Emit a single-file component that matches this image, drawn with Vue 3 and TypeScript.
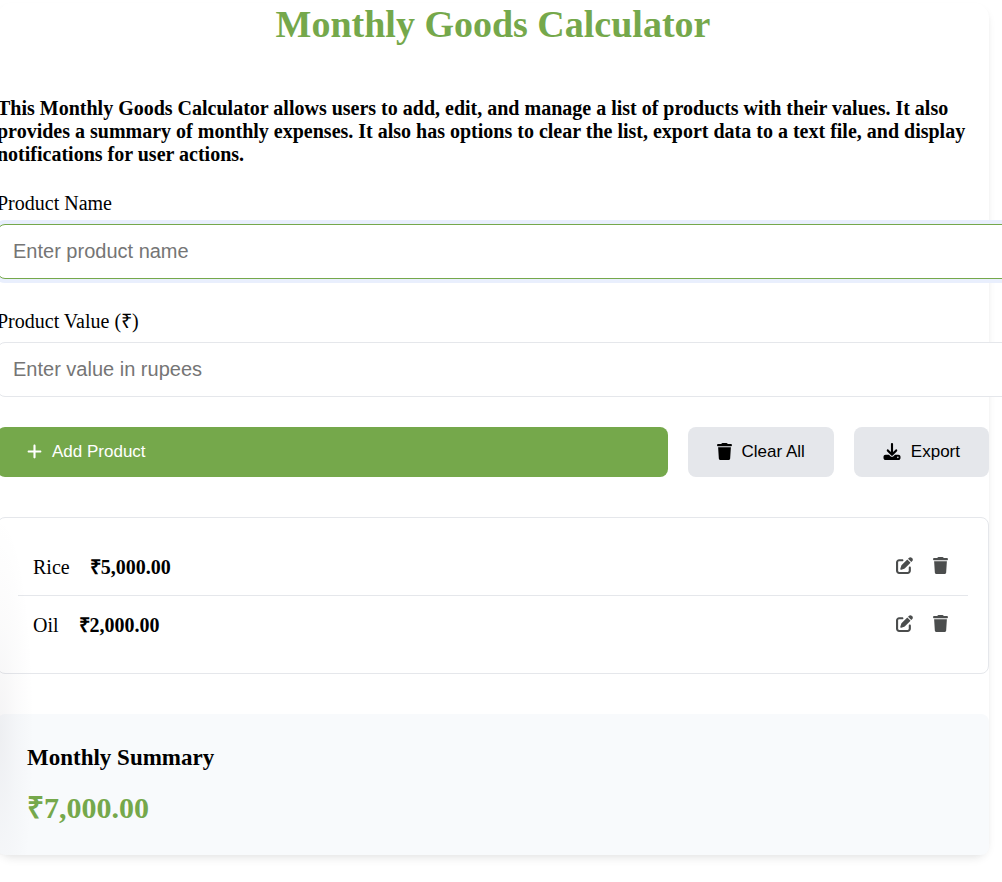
<script setup lang="ts">
import { computed, ref } from 'vue'

interface Product {
  id: number
  name: string
  value: number
}

const products = ref<Product[]>([
  { id: 1, name: 'Rice', value: 5000 },
  { id: 2, name: 'Oil', value: 2000 },
])
const name = ref('')
const value = ref('')
const activeField = ref<'name' | 'value' | ''>('name')
let nextId = 3

const total = computed(() => products.value.reduce((sum, p) => sum + p.value, 0))

function money(amount: number): string {
  return '₹' + amount.toLocaleString('en-IN', { minimumFractionDigits: 2, maximumFractionDigits: 2 })
}

function addProduct(): void {
  const amount = Number(value.value)
  if (!name.value.trim() || !(amount > 0)) return
  products.value.push({ id: nextId++, name: name.value.trim(), value: amount })
  name.value = ''
  value.value = ''
}

function editProduct(product: Product): void {
  name.value = product.name
  value.value = String(product.value)
  removeProduct(product.id)
}

function removeProduct(id: number): void {
  products.value = products.value.filter((p) => p.id !== id)
}

function clearAll(): void {
  products.value = []
}

function exportList(): void {
  const lines = products.value.map((p) => `${p.name}: ${money(p.value)}`)
  const link = document.createElement('a')
  link.href = URL.createObjectURL(new Blob([lines.join('\n')], { type: 'text/plain' }))
  link.download = 'monthly-goods.txt'
  link.click()
}

const trashPath =
  'M135.2 17.7L128 32H32C14.3 32 0 46.3 0 64S14.3 96 32 96H416c17.7 0 32-14.3 32-32s-14.3-32-32-32H320l-7.2-14.3C307.4 6.8 296.3 0 284.2 0H163.8c-12.1 0-23.2 6.8-28.6 17.7zM416 128H32L53.2 467c1.6 25.3 22.6 45 47.9 45H346.9c25.3 0 46.3-19.7 47.9-45L416 128z'
const editPath =
  'M471.6 21.7c-21.9-21.9-57.3-21.9-79.2 0L362.3 51.7l97.9 97.9 30.1-30.1c21.9-21.9 21.9-57.3 0-79.2L471.6 21.7zm-299.2 220c-6.1 6.1-10.8 13.6-13.5 21.9l-29.6 88.8c-2.9 8.6-.6 18.1 5.8 24.6s15.9 8.7 24.6 5.8l88.8-29.6c8.2-2.7 15.7-7.4 21.9-13.5L437.7 172.3 339.7 74.3 172.4 241.7zM96 64C43 64 0 107 0 160V416c0 53 43 96 96 96H352c53 0 96-43 96-96V320c0-17.7-14.3-32-32-32s-32 14.3-32 32v96c0 17.7-14.3 32-32 32H96c-17.7 0-32-14.3-32-32V160c0-17.7 14.3-32 32-32h96c17.7 0 32-14.3 32-32s-14.3-32-32-32H96z'
const downloadPath =
  'M288 32c0-17.7-14.3-32-32-32s-32 14.3-32 32V274.7l-73.4-73.4c-12.5-12.5-32.8-12.5-45.3 0s-12.5 32.8 0 45.3l128 128c12.5 12.5 32.8 12.5 45.3 0l128-128c12.5-12.5 12.5-32.8 0-45.3s-32.8-12.5-45.3 0L288 274.7V32zM64 352c-35.3 0-64 28.7-64 64v32c0 35.3 28.7 64 64 64H448c35.3 0 64-28.7 64-64V416c0-35.3-28.7-64-64-64H346.5l-45.3 45.3c-25 25-65.5 25-90.5 0L165.5 352H64zm368 56a24 24 0 1 1 0 48 24 24 0 1 1 0-48z'
const plusPath =
  'M256 80c0-17.7-14.3-32-32-32s-32 14.3-32 32V224H48c-17.7 0-32 14.3-32 32s14.3 32 32 32H192V432c0 17.7 14.3 32 32 32s32-14.3 32-32V288H400c17.7 0 32-14.3 32-32s-14.3-32-32-32H256V80z'
</script>

<template>
  <div class="page">
    <main class="calculator">
      <h1>Monthly Goods Calculator</h1>
      <h4>
        This Monthly Goods Calculator allows users to add, edit, and manage a list of products with
        their values. It also provides a summary of monthly expenses. It also has options to clear
        the list, export data to a text file, and display notifications for user actions.
      </h4>

      <form @submit.prevent="addProduct">
        <div class="field">
          <label for="product-name">Product Name</label>
          <input
            id="product-name"
            v-model="name"
            :class="{ active: activeField === 'name' }"
            type="text"
            placeholder="Enter product name"
            @focus="activeField = 'name'"
          />
        </div>
        <div class="field">
          <label for="product-value">Product Value (₹)</label>
          <input
            id="product-value"
            v-model="value"
            :class="{ active: activeField === 'value' }"
            type="text"
            inputmode="decimal"
            placeholder="Enter value in rupees"
            @focus="activeField = 'value'"
          />
        </div>
        <div class="actions">
          <button class="btn primary" type="submit">
            <svg class="icon narrow" viewBox="0 0 448 512" aria-hidden="true"><path :d="plusPath" /></svg>
            Add Product
          </button>
          <button class="btn" type="button" @click="clearAll">
            <svg class="icon narrow" viewBox="0 0 448 512" aria-hidden="true"><path :d="trashPath" /></svg>
            Clear All
          </button>
          <button class="btn" type="button" @click="exportList">
            <svg class="icon wide" viewBox="0 0 512 512" aria-hidden="true"><path :d="downloadPath" /></svg>
            Export
          </button>
        </div>
      </form>

      <ul class="products">
        <li v-for="product in products" :key="product.id">
          <span class="product">
            <span>{{ product.name }}</span>
            <strong>{{ money(product.value) }}</strong>
          </span>
          <span class="tools">
            <button type="button" :aria-label="`Edit ${product.name}`" @click="editProduct(product)">
              <svg class="icon" viewBox="0 0 512 512" aria-hidden="true"><path :d="editPath" /></svg>
            </button>
            <button type="button" :aria-label="`Delete ${product.name}`" @click="removeProduct(product.id)">
              <svg class="icon narrow" viewBox="0 0 448 512" aria-hidden="true"><path :d="trashPath" /></svg>
            </button>
          </span>
        </li>
      </ul>

      <section class="summary">
        <h3>Monthly Summary</h3>
        <p>{{ money(total) }}</p>
      </section>
    </main>
    <div class="edge-shade"></div>
  </div>
</template>

<style>
body {
  margin: 0;
  background: #fff;
}
</style>

<style scoped>
.page {
  position: relative;
  overflow: hidden;
  padding: 3px 13px 27px 0;
  color: #000;
  font-family: "Liberation Serif", "Times New Roman", serif;
  font-size: 20px;
  line-height: 23px;
}

.calculator {
  margin-left: -3px;
  border-radius: 15px;
  background: #fff;
  box-shadow: 0 5px 8px -1px rgba(0, 0, 0, 0.08), 0 2px 5px -1px rgba(0, 0, 0, 0.03);
}

h1 {
  margin: 0 0 51px;
  color: #75a84b;
  font-size: 38px;
  line-height: 43px;
  text-align: center;
}

h4 {
  margin: 0 0 26px;
  font-size: 20px;
}

.field {
  display: flex;
  flex-direction: column;
  align-items: flex-start;
  gap: 9px;
}

.field + .field {
  margin-top: 31px;
}

.field input {
  box-sizing: content-box;
  width: 100%;
  height: 23px;
  padding: 15px;
  border: 1px solid #e5e7eb;
  border-radius: 8px;
  outline: none;
  background: #fff;
  color: #000;
  font: 20px "Liberation Sans", Arial, sans-serif;
}

.field input::placeholder {
  color: #757575;
}

.field input.active {
  border-color: #75a84b;
  box-shadow: 0 0 0 4px #e9effd;
}

.actions {
  display: flex;
  gap: 20px;
  margin: 30px 0 40px;
}

.btn {
  display: flex;
  align-items: center;
  gap: 10px;
  height: 50px;
  padding: 0 29px;
  border: 0;
  border-radius: 8px;
  background: #e5e7eb;
  color: #000;
  font: 17px "Liberation Sans", Arial, sans-serif;
  cursor: pointer;
}

.btn.primary {
  flex: 1;
  padding: 0 30px;
  background: #75a84b;
  color: #fff;
}

.icon {
  display: block;
  width: 17px;
  height: 17px;
  fill: currentColor;
}

.icon.narrow {
  width: 15px;
}

.icon.wide {
  width: 18px;
}

.btn .icon {
  margin-bottom: 1px;
}

.products {
  margin: 0 0 40px;
  padding: 20px;
  border: 1px solid #e5e7eb;
  border-radius: 8px;
  list-style: none;
}

.products li {
  display: flex;
  align-items: flex-start;
  justify-content: space-between;
  padding: 18px 15px 16px;
}

.products li + li {
  border-top: 1px solid #e5e7eb;
}

.product {
  display: flex;
  gap: 20px;
}

.tools {
  display: flex;
  gap: 11px;
}

.tools button {
  display: flex;
  align-items: center;
  justify-content: center;
  width: 25px;
  height: 19px;
  padding: 0;
  border: 0;
  background: none;
  color: #4b4d4d;
  cursor: pointer;
}

.summary {
  padding: 30px;
  border-radius: 8px;
  background: #f8fafc;
}

.summary h3 {
  margin: 0 0 20px;
  font-size: 23px;
  line-height: 27px;
}

.summary p {
  margin: 0;
  color: #75a84b;
  font-size: 30px;
  font-weight: bold;
  line-height: 34px;
}

.edge-shade {
  position: absolute;
  bottom: 27px;
  left: 0;
  width: 34px;
  height: 380px;
  background: radial-gradient(ellipse 34px 220px at 0 68%, rgba(40, 30, 50, 0.05), rgba(40, 30, 50, 0.02) 50%, transparent);
  pointer-events: none;
}
</style>
